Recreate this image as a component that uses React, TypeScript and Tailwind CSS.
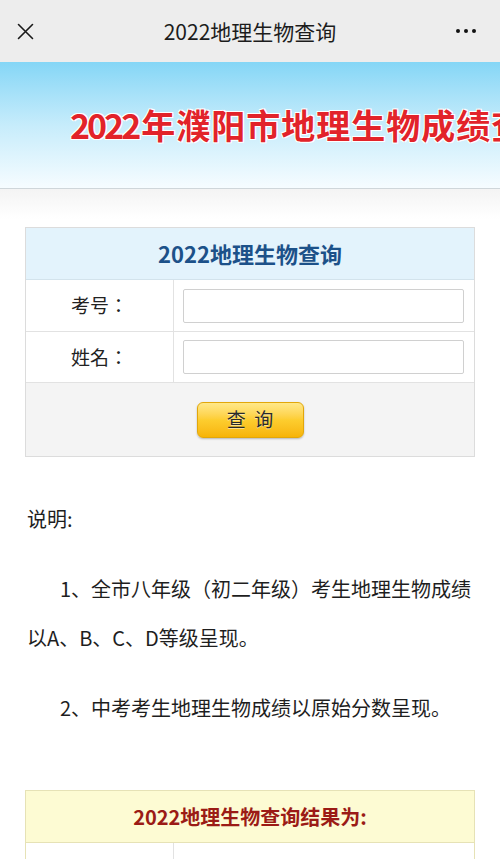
import React from "react";

const cjk = { fontFamily: '"Noto Sans CJK SC", "Noto Sans", sans-serif' };
const cjkTC = { fontFamily: '"Noto Sans CJK TC", "Noto Sans CJK SC", sans-serif' };

export default function App() {
  return (
    <div className="w-[500px] min-h-[859px] bg-white overflow-hidden" style={cjk}>
      {/* top nav */}
      <div className="h-[62px] bg-[#ededed] grid grid-cols-[60px_1fr_60px] items-center">
        <div className="flex items-center pl-[17px]">
          <svg width="17" height="17" viewBox="0 0 17 17" fill="none" stroke="#1a1a1a" strokeWidth="1.6" strokeLinecap="round">
            <path d="M1.5 1.5 L15.5 15.5 M15.5 1.5 L1.5 15.5" />
          </svg>
        </div>
        <div className="text-center text-[21px] text-[#1c1c1c] leading-none">2022地理生物查询</div>
        <div className="flex items-center justify-end pr-[24px] gap-[4px]">
          <span className="w-[4px] h-[4px] rounded-full bg-[#111]" />
          <span className="w-[4px] h-[4px] rounded-full bg-[#111]" />
          <span className="w-[4px] h-[4px] rounded-full bg-[#111]" />
        </div>
      </div>

      {/* banner */}
      <div className="h-[127px] bg-gradient-to-b from-[#84d6f6] via-[#c6ecfb] to-[#f6fcff] border-b border-[#cfd6da] flex items-center pl-[70px] overflow-hidden whitespace-nowrap">
        <div
          className="text-[34px] font-bold text-[#e2232a] tracking-[1px] leading-none"
          style={{ textShadow: "1px 1px 0 #fff, -1px -1px 0 #fff, 1px -1px 0 #fff, -1px 1px 0 #fff" }}
        >
          <span className="tracking-[-3px] mr-[3px]">2022</span>年濮阳市地理生物成绩查询系统
        </div>
      </div>

      {/* content */}
      <div className="bg-gradient-to-b from-[#f4f4f4] to-white to-[30px] px-[25px] pt-[38px]">
        {/* query table */}
        <div className="border border-[#dcdcdc]">
          <div className="h-[52px] bg-[#e3f3fc] border-b border-[#d3e3ec] flex items-center justify-center text-[22px] font-bold text-[#1c5189]">
            2022地理生物查询
          </div>
          <div className="h-[52px] grid grid-cols-[148px_1fr] border-b border-[#e2e2e2]">
            <div className="flex items-center justify-center text-[19px] text-[#222] border-r border-[#e2e2e2]" style={cjkTC}>考号：</div>
            <div className="flex items-center pl-[9px] pr-[10px]">
              <div className="h-[34px] w-full border border-[#d0d0d0] rounded-[2px] bg-white" />
            </div>
          </div>
          <div className="h-[51px] grid grid-cols-[148px_1fr] border-b border-[#e2e2e2]">
            <div className="flex items-center justify-center text-[19px] text-[#222] border-r border-[#e2e2e2]" style={cjkTC}>姓名：</div>
            <div className="flex items-center pl-[9px] pr-[10px]">
              <div className="h-[34px] w-full border border-[#d0d0d0] rounded-[2px] bg-white" />
            </div>
          </div>
          <div className="h-[73px] bg-[#f4f4f4] flex items-center justify-center">
            <div
              className="w-[107px] h-[36px] rounded-[6px] border border-[#e2a70a] bg-gradient-to-b from-[#ffe888] via-[#fdcd2e] to-[#f7b404] flex items-center justify-center text-[19px] text-[#2a2a2a] shadow-[0_1px_2px_rgba(0,0,0,0.25)]"
              style={{ textShadow: "0 1px 0 rgba(255,255,255,0.5)" }}
            >
              查&nbsp;&nbsp;询
            </div>
          </div>
        </div>

        {/* notes */}
        <div className="mt-[37px] text-[20px] text-[#1e1e1e] leading-[49px] pl-[2px]">
          <p className="mb-[21px]">说明:</p>
          <p className="mb-[21px] indent-[33px]">1、全市八年级（初二年级）考生地理生物成绩以A、B、C、D等级呈现。</p>
          <p className="indent-[33px]">2、中考考生地理生物成绩以原始分数呈现。</p>
        </div>

        {/* result table */}
        <div className="mt-[58px] border border-[#e6e2b6]">
          <div className="h-[52px] bg-[#fdfbd3] border-b border-[#e6e2b6] flex items-center justify-center text-[20px] font-bold text-[#9b1b16]">
            2022地理生物查询结果为:
          </div>
          <div className="h-[52px] grid grid-cols-[148px_1fr]">
            <div className="flex items-center justify-center text-[19px] text-[#222] border-r border-[#e2e2e2]" style={cjkTC}>考号：</div>
            <div />
          </div>
        </div>
      </div>
    </div>
  );
}
